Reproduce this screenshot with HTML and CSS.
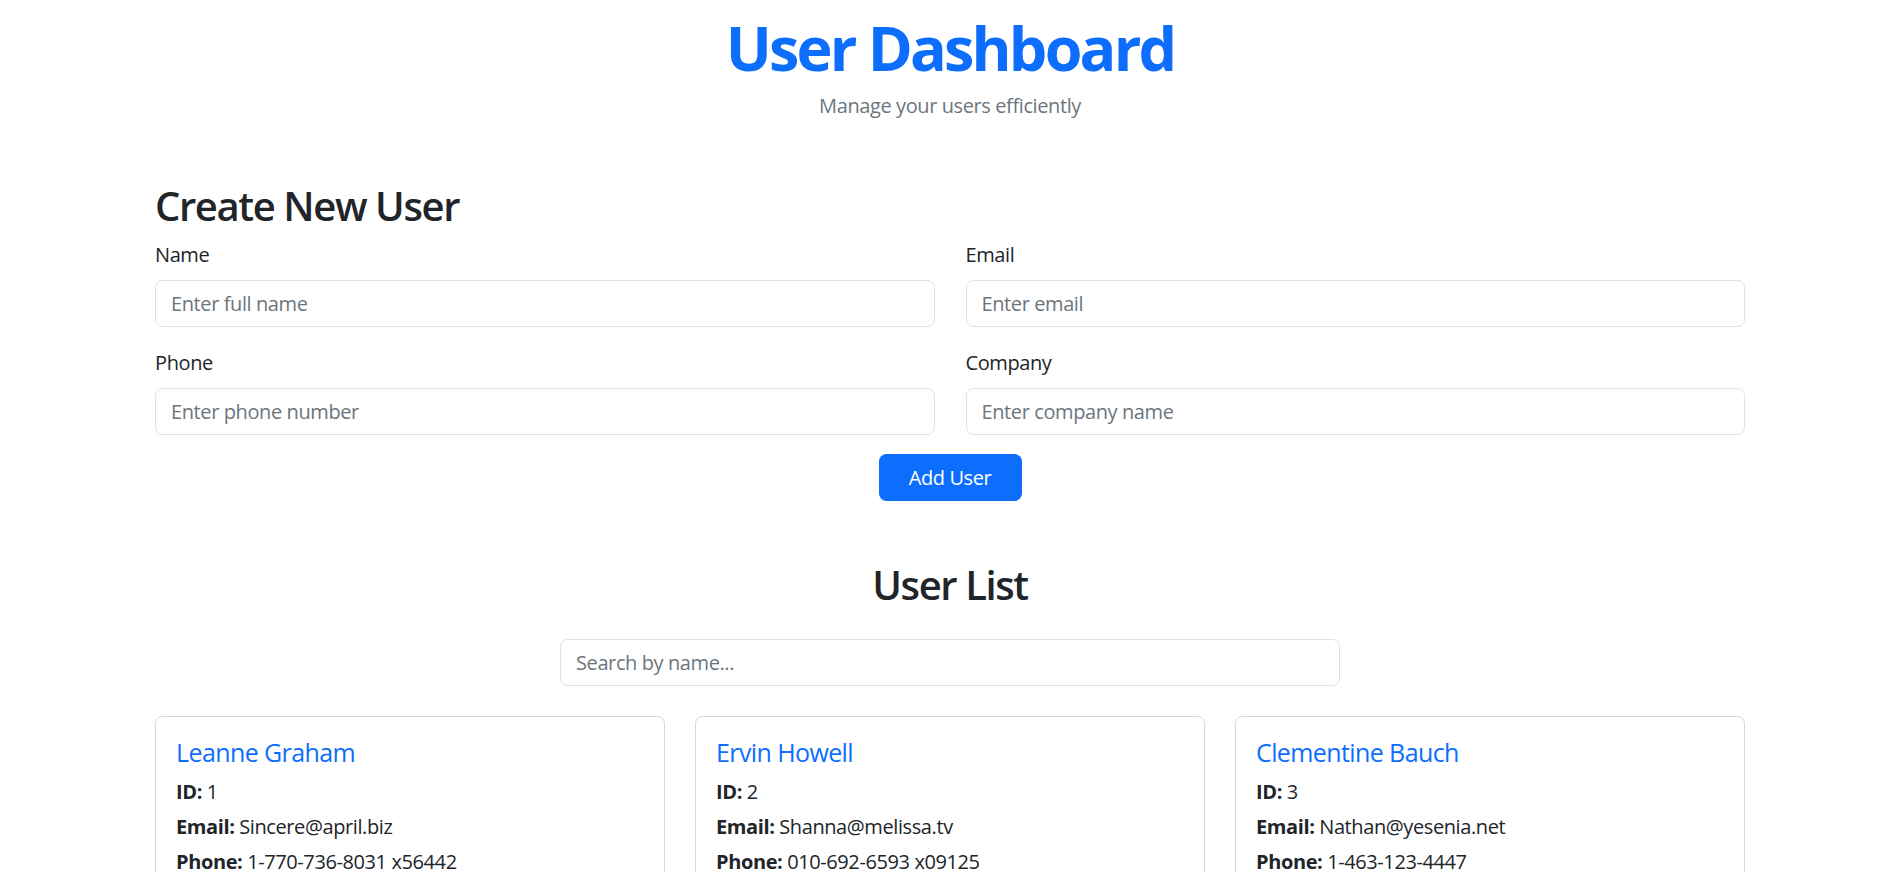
FILE: index.html
```html
<!DOCTYPE html>
<html lang="en">
<head>
<meta charset="utf-8">
<title>User Dashboard</title>
<link rel="stylesheet" href="styles.css">
</head>
<body>
<div class="page">
  <header class="header">
    <h1 class="title">User Dashboard</h1>
    <p class="subtitle">Manage your users efficiently</p>
  </header>

  <section class="create">
    <h2 class="section-title">Create New User</h2>
    <form class="form-grid">
      <div class="field">
        <label class="label" for="name">Name</label>
        <input class="input" id="name" type="text" placeholder="Enter full name">
      </div>
      <div class="field">
        <label class="label" for="email">Email</label>
        <input class="input" id="email" type="email" placeholder="Enter email">
      </div>
      <div class="field">
        <label class="label" for="phone">Phone</label>
        <input class="input" id="phone" type="text" placeholder="Enter phone number">
      </div>
      <div class="field">
        <label class="label" for="company">Company</label>
        <input class="input" id="company" type="text" placeholder="Enter company name">
      </div>
    </form>
    <div class="actions">
      <button class="btn" type="button">Add User</button>
    </div>
  </section>

  <section class="list">
    <h2 class="section-title list-title">User List</h2>
    <div class="search-wrap">
      <input class="input search" type="text" placeholder="Search by name...">
    </div>
    <div class="cards">
      <div class="card">
        <h5 class="card-name">Leanne Graham</h5>
        <p class="card-text"><b>ID:</b> 1</p>
        <p class="card-text"><b>Email:</b> Sincere@april.biz</p>
        <p class="card-text"><b>Phone:</b> 1-770-736-8031 x56442</p>
        <p class="card-text"><b>Company:</b> Romaguera-Crona</p>
      </div>
      <div class="card">
        <h5 class="card-name">Ervin Howell</h5>
        <p class="card-text"><b>ID:</b> 2</p>
        <p class="card-text"><b>Email:</b> Shanna@melissa.tv</p>
        <p class="card-text"><b>Phone:</b> 010-692-6593 x09125</p>
        <p class="card-text"><b>Company:</b> Deckow-Crist</p>
      </div>
      <div class="card">
        <h5 class="card-name">Clementine Bauch</h5>
        <p class="card-text"><b>ID:</b> 3</p>
        <p class="card-text"><b>Email:</b> Nathan@yesenia.net</p>
        <p class="card-text"><b>Phone:</b> 1-463-123-4447</p>
        <p class="card-text"><b>Company:</b> Romaguera-Jacobson</p>
      </div>
    </div>
  </section>
</div>
</body>
</html>
```

FILE: styles.css
```css
html, body {
  margin: 0;
  padding: 0;
}

body {
  font-family: "Open Sans", "Noto Sans", sans-serif;
  font-size: 20px;
  line-height: 1.5;
  letter-spacing: -0.4px;
  color: #212529;
  background: #ffffff;
}

.page {
  width: 1590px;
  margin: 0 auto;
  padding-left: 4px;
}

.header {
  text-align: center;
  padding-top: 11px;
}

.title {
  margin: 0;
  font-size: 61px;
  font-weight: 700;
  line-height: 1.2;
  letter-spacing: -2.8px;
  color: #0d6efd;
}

.subtitle {
  margin: 7px 0 0;
  font-size: 20px;
  color: #6c757d;
}

.section-title {
  margin: 0 0 10px;
  font-size: 40px;
  font-weight: 600;
  line-height: 1.2;
  letter-spacing: -1.4px;
}

.create {
  margin-top: 61px;
}

.form-grid {
  display: grid;
  grid-template-columns: 1fr 1fr;
  column-gap: 31px;
  row-gap: 21px;
  margin: 0;
}

.label {
  display: block;
  margin-bottom: 10px;
}

.input {
  display: block;
  width: 100%;
  box-sizing: border-box;
  height: 47px;
  padding: 7px 15px;
  font-family: inherit;
  font-size: 20px;
  line-height: 30px;
  letter-spacing: -0.4px;
  color: #212529;
  background: #fff;
  border: 1px solid #dee2e6;
  border-radius: 7.5px;
  outline: none;
}

.input::placeholder {
  color: #6c757d;
  opacity: 1;
}

.actions {
  display: flex;
  justify-content: center;
  margin-top: 19px;
}

.btn {
  width: 143px;
  height: 47px;
  padding: 0;
  font-family: inherit;
  font-size: 20px;
  letter-spacing: -0.4px;
  color: #fff;
  background: #0d6efd;
  border: 0;
  border-radius: 7.5px;
}

.list-title {
  text-align: center;
  margin: 60px 0 30px;
}

.search-wrap {
  display: flex;
  justify-content: center;
}

.search {
  width: 780px;
}

.cards {
  display: grid;
  grid-template-columns: repeat(3, 1fr);
  gap: 30px;
  margin-top: 30px;
}

.card {
  border: 1px solid #d5d6d7;
  border-radius: 7.5px;
  padding: 20px;
}

.card-name {
  margin: 0 0 10px;
  font-size: 25px;
  font-weight: 500;
  line-height: 1.2;
  letter-spacing: -0.6px;
  color: #0d6efd;
}

.card-text {
  margin: 0 0 5px;
}

.card-text b {
  font-weight: 700;
}
```
